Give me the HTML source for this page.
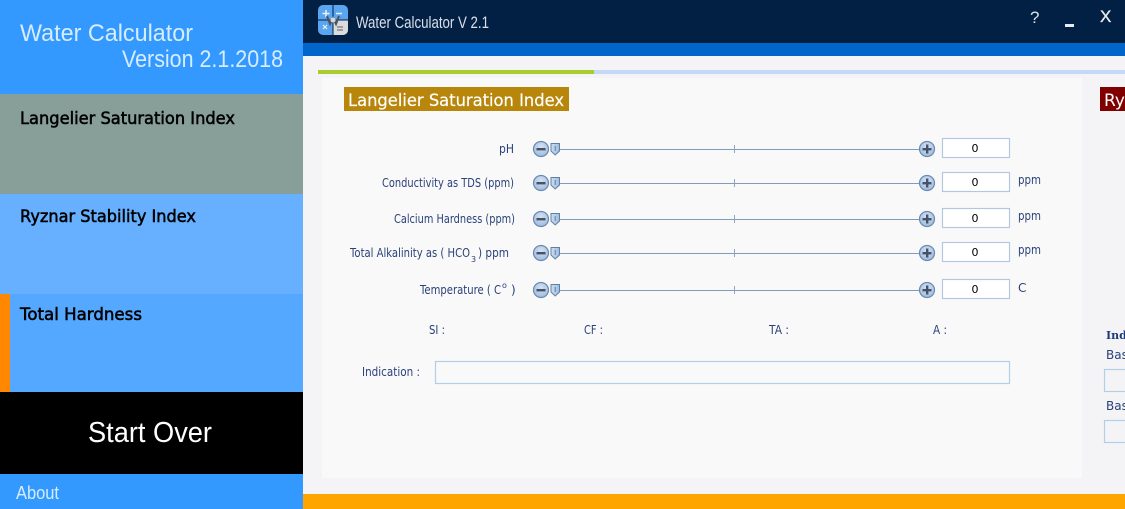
<!DOCTYPE html>
<html><head><meta charset="utf-8"><style>
html,body{margin:0;padding:0;width:1125px;height:509px;overflow:hidden;background:#f4f4f6}
svg{display:block}
.r{font-family:"DejaVu Sans","Liberation Sans",sans-serif}
.l{font-family:"Liberation Sans",sans-serif}
.d{font-family:"DejaVu Sans",sans-serif;font-size:12px;fill:#2a4278}
.m{font-family:"DejaVu Sans",sans-serif;font-size:11px;fill:#000;text-anchor:middle}
</style></head><body>
<svg width="1125" height="509" viewBox="0 0 1125 509" xmlns="http://www.w3.org/2000/svg">
<defs>
<radialGradient id="b" cx="50%" cy="35%" r="70%"><stop offset="0" stop-color="#d5e2f3"/><stop offset="1" stop-color="#9cb8da"/></radialGradient>
<linearGradient id="t" x1="0" y1="0" x2="1" y2="0"><stop offset="0" stop-color="#cfdff2"/><stop offset="1" stop-color="#9fbbdc"/></linearGradient>
<g id="row">
<line x1="559" y1="0.500" x2="921" y2="0.500" stroke="#7f9cbf" stroke-width="1"/>
<line x1="734.500" y1="-4" x2="734.500" y2="4" stroke="#8fa5c0" stroke-width="1"/>
<circle cx="541" cy="0" r="7.500" fill="url(#b)" stroke="#6a8ab2" stroke-width="1.200"/>
<rect x="536.500" y="-1" width="9" height="2.400" fill="#44536a"/>
<circle cx="927" cy="0" r="7.500" fill="url(#b)" stroke="#6a8ab2" stroke-width="1.200"/>
<rect x="922.500" y="-1" width="9" height="2.400" fill="#44536a"/>
<rect x="926" y="-4.500" width="2.400" height="9" fill="#44536a"/>
<path d="M551 -5.500H559.500V2L555.200 6L551 2Z" fill="url(#t)" stroke="#5f7fa8" stroke-width="1"/>
<line x1="555.200" y1="-3" x2="555.200" y2="2" stroke="#5f7fa8" stroke-width="1"/>
</g>
</defs>

<!-- sidebar -->
<rect x="0" y="0" width="303" height="94" fill="#3399ff"/>
<rect x="0" y="94" width="303" height="100" fill="#879e99"/>
<rect x="0" y="194" width="303" height="100" fill="#66b0ff"/>
<rect x="0" y="294" width="303" height="98" fill="#55a8ff"/>
<rect x="0" y="294" width="10" height="98" fill="#ff8800"/>
<rect x="0" y="392" width="303" height="82" fill="#000"/>
<rect x="0" y="474" width="303" height="35" fill="#3399ff"/>

<text class="l" x="20" y="41" font-size="24" fill="#d6ecff" textLength="173" lengthAdjust="spacingAndGlyphs">Water Calculator</text>
<text class="l" x="122" y="67" font-size="24" fill="#d6ecff" textLength="161" lengthAdjust="spacingAndGlyphs">Version 2.1.2018</text>
<text class="r" x="20" y="124" font-size="17" fill="#000" stroke="#000" stroke-width=".55" textLength="215" lengthAdjust="spacingAndGlyphs">Langelier Saturation Index</text>
<text class="r" x="20" y="222" font-size="17" fill="#000" stroke="#000" stroke-width=".55" textLength="176" lengthAdjust="spacingAndGlyphs">Ryznar Stability Index</text>
<text class="r" x="20" y="320" font-size="17" fill="#000" stroke="#000" stroke-width=".55" textLength="122" lengthAdjust="spacingAndGlyphs">Total Hardness</text>
<text class="l" x="88" y="442" font-size="29" fill="#fff" textLength="124" lengthAdjust="spacingAndGlyphs">Start Over</text>
<text class="l" x="16" y="499" font-size="18" fill="#d6ecff" textLength="43" lengthAdjust="spacingAndGlyphs">About</text>

<!-- top -->
<rect x="303" y="0" width="822" height="43" fill="#021f44"/>
<rect x="303" y="43" width="822" height="13" fill="#0066cc"/>
<rect x="303" y="56" width="822" height="438" fill="#f4f4f6"/>
<rect x="303" y="494" width="822" height="15" fill="#ffa500"/>
<rect x="318" y="70" width="276" height="4" fill="#a9cc2e"/>
<rect x="594" y="70" width="531" height="4" fill="#c3d9f5"/>
<rect x="322" y="78" width="760" height="400" fill="#f9f9fa"/>

<!-- app icon -->
<rect x="318" y="5" width="30" height="30" rx="5" fill="#5aa4f0"/>
<path d="M333 20H348V30a5 5 0 0 1-5 5H333Z" fill="#dcdcdc"/>
<line x1="333" y1="5" x2="333" y2="35" stroke="#021f44" stroke-width="1"/>
<line x1="318" y1="20" x2="348" y2="20" stroke="#021f44" stroke-width="1"/>
<path d="M322.500 13.500h7M326 10v7M336 13.500h6" stroke="#e8f2ff" stroke-width="1.500" fill="none"/>
<path d="M323 25l4 4M327 25l-4 4" stroke="#e8f2ff" stroke-width="1.200" fill="none"/>
<path d="M337 27h6M337 30h6" stroke="#8a8a8a" stroke-width="1.400" fill="none"/>
<path d="M327 16l3 8 3-6 3 6 3-8" stroke="#4a5560" stroke-width="2" fill="none"/>
<circle cx="333" cy="20" r="2.500" fill="#d8d8d8"/>

<text class="l" x="356" y="28" font-size="17" fill="#d8e0ea" textLength="133" lengthAdjust="spacingAndGlyphs">Water Calculator V 2.1</text>
<text class="l" x="1030" y="23" font-size="17" fill="#d8e0ea">?</text>
<rect x="1065" y="24" width="9" height="3" fill="#e8ecf2"/>
<text class="l" x="1100" y="22" font-size="17" fill="#e8ecf2" stroke="#e8ecf2" stroke-width=".3">X</text>

<!-- badges -->
<rect x="344" y="87" width="225" height="24" fill="#b8860b"/>
<text class="r" x="348" y="106" font-size="17" fill="#fff" stroke="#fff" stroke-width=".2" textLength="216" lengthAdjust="spacingAndGlyphs">Langelier Saturation Index</text>
<rect x="1100" y="87" width="25" height="24" fill="#800000"/>
<text class="r" x="1104" y="106" font-size="17" fill="#fff">Ryznar</text>

<!-- rows -->
<use href="#row" y="149"/>
<use href="#row" y="183"/>
<use href="#row" y="219"/>
<use href="#row" y="253"/>
<use href="#row" y="290"/>

<g fill="#fff" stroke="#b3c7de" stroke-width="1.200">
<rect x="942.500" y="138.500" width="67" height="19"/>
<rect x="942.500" y="172.500" width="67" height="19"/>
<rect x="942.500" y="208.500" width="67" height="19"/>
<rect x="942.500" y="242.500" width="67" height="19"/>
<rect x="942.500" y="279.500" width="67" height="19"/>
</g>
<text class="m" x="975" y="152">0</text>
<text class="m" x="975" y="186">0</text>
<text class="m" x="975" y="222">0</text>
<text class="m" x="975" y="256">0</text>
<text class="m" x="975" y="293">0</text>

<text class="d" x="499" y="153" textLength="15" lengthAdjust="spacingAndGlyphs">pH</text>
<text class="d" x="382" y="187" textLength="132" lengthAdjust="spacingAndGlyphs">Conductivity as TDS (ppm)</text>
<text class="d" x="394" y="223" textLength="121" lengthAdjust="spacingAndGlyphs">Calcium Hardness (ppm)</text>
<text class="d" x="350" y="257" textLength="120" lengthAdjust="spacingAndGlyphs">Total Alkalinity as ( HCO</text>
<text class="d" x="471" y="262" style="font-size:8px">3</text>
<text class="d" x="478" y="257" textLength="31" lengthAdjust="spacingAndGlyphs">) ppm</text>
<text class="d" x="420" y="294" textLength="81" lengthAdjust="spacingAndGlyphs">Temperature ( C</text>
<text class="d" x="502" y="288" style="font-size:8px">o</text>
<text class="d" x="511" y="294">)</text>

<text class="d" x="1018" y="184" textLength="23" lengthAdjust="spacingAndGlyphs">ppm</text>
<text class="d" x="1018" y="220" textLength="23" lengthAdjust="spacingAndGlyphs">ppm</text>
<text class="d" x="1018" y="254" textLength="23" lengthAdjust="spacingAndGlyphs">ppm</text>
<text class="d" x="1018" y="292">C</text>

<text class="d" x="429" y="334" textLength="16" lengthAdjust="spacingAndGlyphs">SI :</text>
<text class="d" x="584" y="334" textLength="19" lengthAdjust="spacingAndGlyphs">CF :</text>
<text class="d" x="769" y="334" textLength="20" lengthAdjust="spacingAndGlyphs">TA :</text>
<text class="d" x="933" y="334" textLength="14" lengthAdjust="spacingAndGlyphs">A :</text>

<text class="d" x="362" y="376" textLength="58" lengthAdjust="spacingAndGlyphs">Indication :</text>
<rect x="435.500" y="361.500" width="574" height="22" fill="#f9f9fa" stroke="#b3cfe8" stroke-width="1.200"/>

<!-- right clipped panel -->
<text x="1106" y="339" font-family="'DejaVu Serif','Liberation Serif',serif" font-size="11" font-weight="bold" fill="#1f3a78">Indication</text>
<text class="d" x="1106" y="359">Base</text>
<rect x="1104.500" y="369.500" width="40" height="22" fill="#f4f4f6" stroke="#b3cfe8" stroke-width="1.200"/>
<text class="d" x="1106" y="410">Base</text>
<rect x="1104.500" y="420.500" width="40" height="22" fill="#f4f4f6" stroke="#b3cfe8" stroke-width="1.200"/>
</svg>
</body></html>
